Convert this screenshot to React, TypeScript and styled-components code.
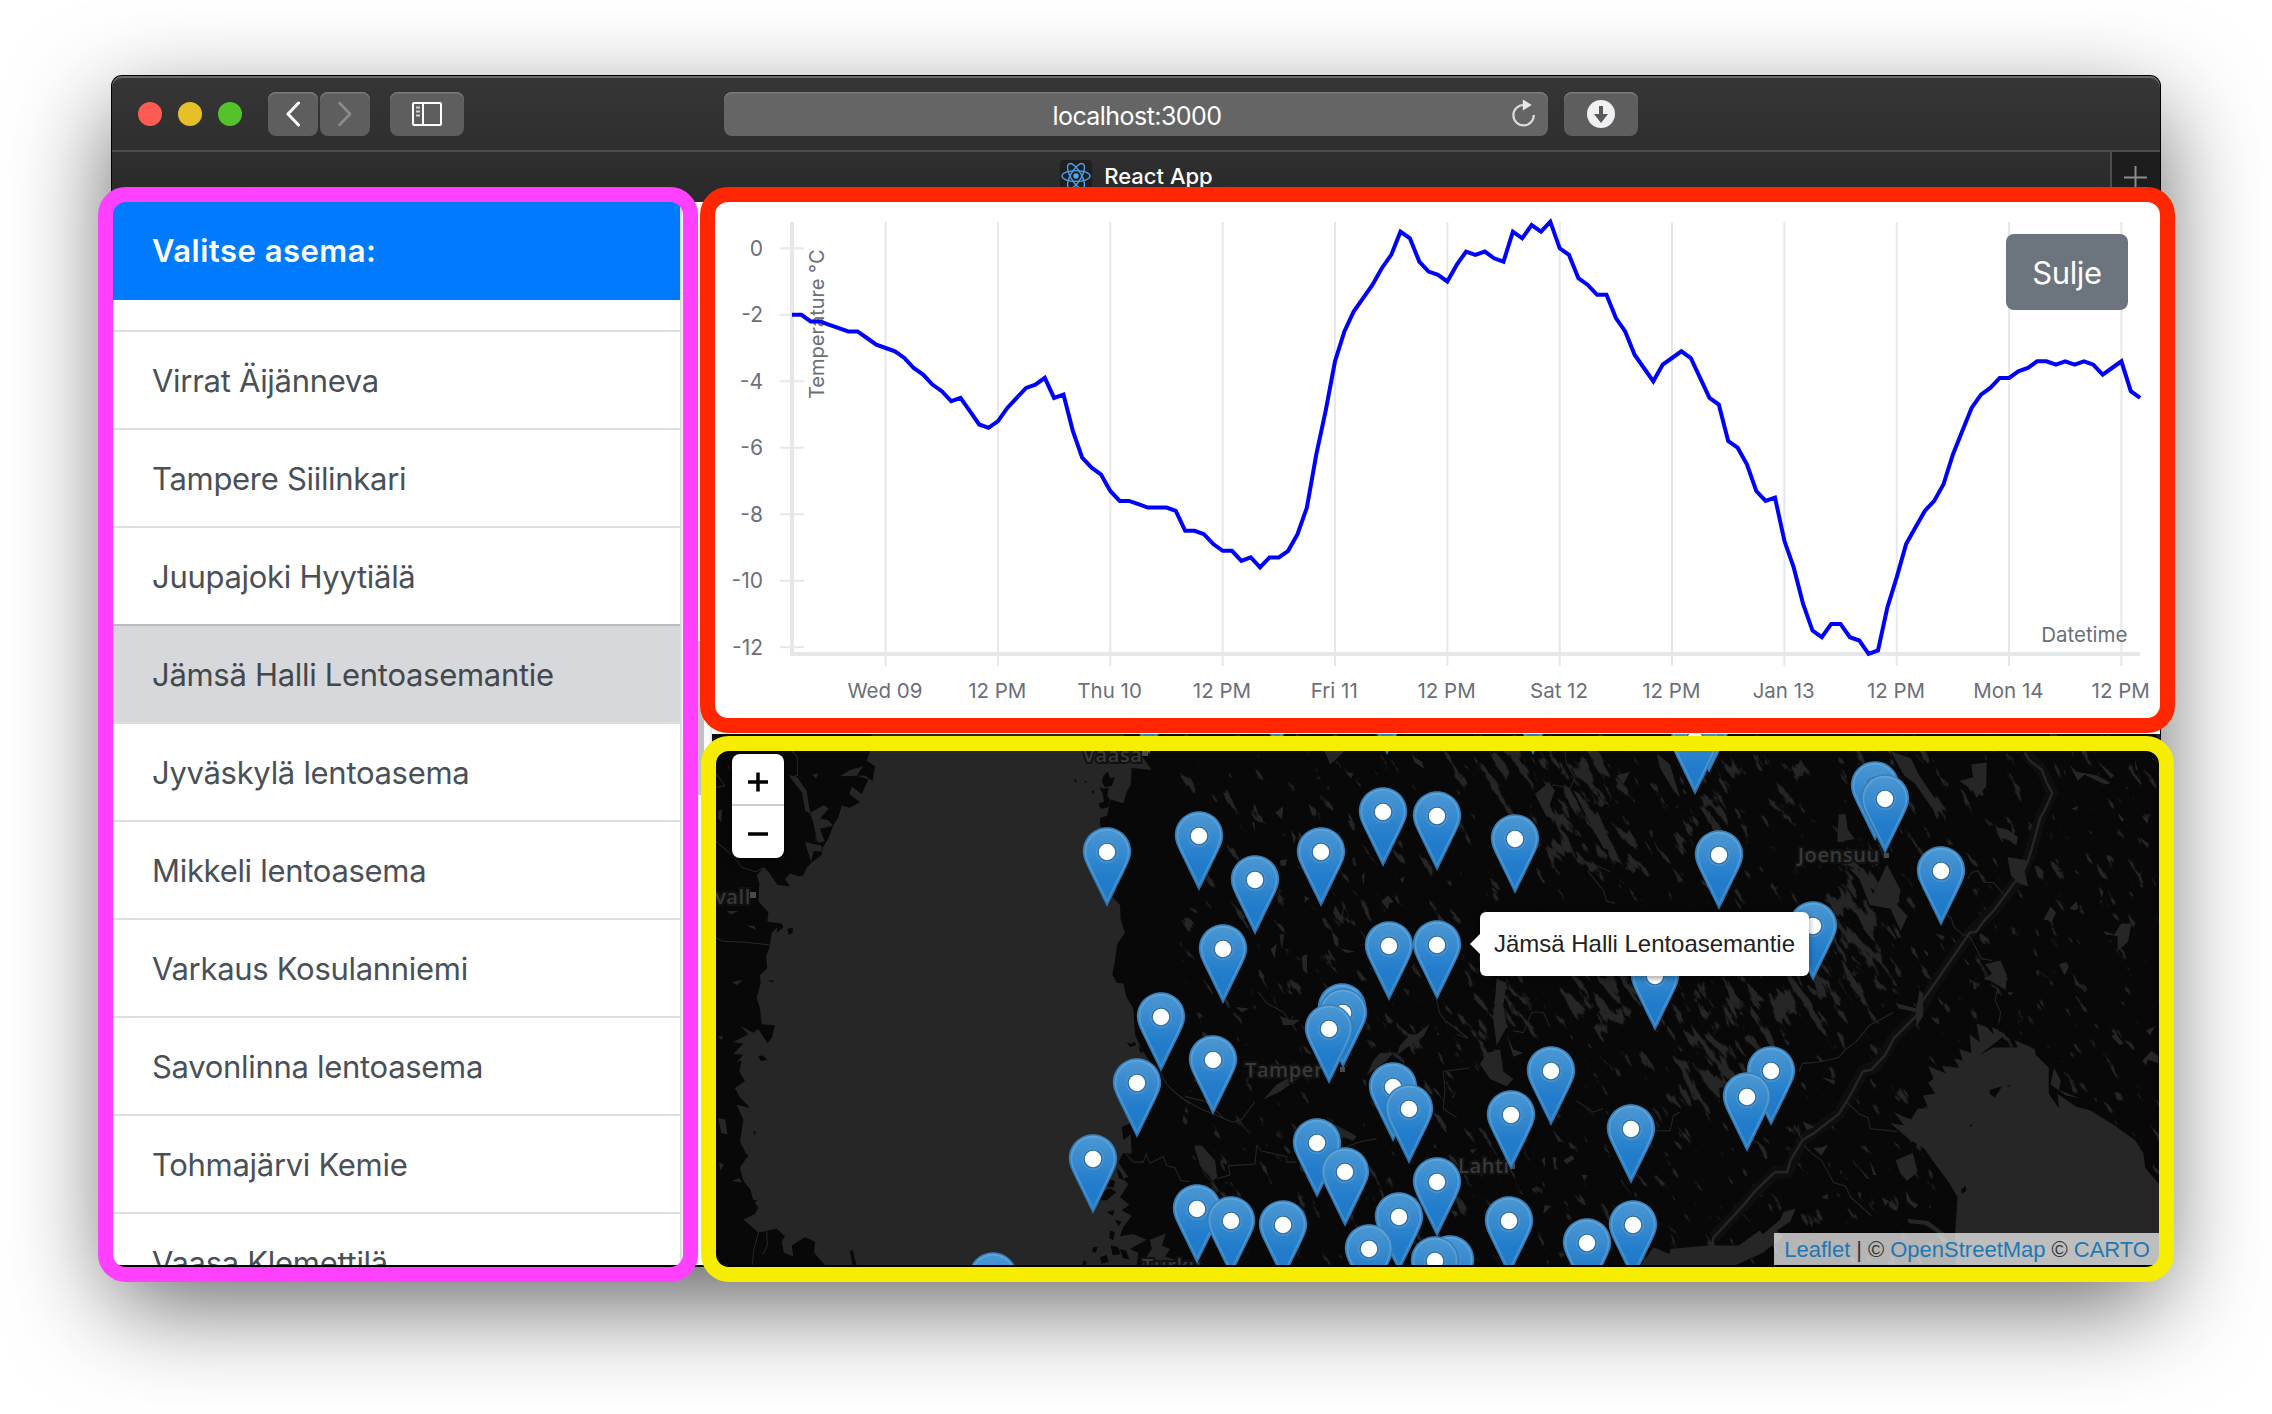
import React from "react";
import styled, { createGlobalStyle, css } from "styled-components";

const GlobalStyle = createGlobalStyle`
  html, body { margin: 0; padding: 0; background: #fff; }
  * { box-sizing: border-box; }
`;

const UI_FONT = `Inter, "Liberation Sans", sans-serif`;
const MAP_FONT = `"Liberation Sans", Arial, sans-serif`;

const Desktop = styled.div`
  position: relative;
  width: 2272px;
  height: 1414px;
  padding: 76px 112px 0;
  overflow: hidden;
  background: #fff;
  font-family: ${UI_FONT};
`;

const Window = styled.div`
  display: flex;
  flex-direction: column;
  height: 1190px;
  border-radius: 10px 10px 0 0;
  background: #2c2c2c;
  box-shadow: 0 0 0 1px #000, 0 36px 100px rgba(0, 0, 0, 0.62);
`;

/* ---------- browser chrome ---------- */

const Toolbar = styled.div`
  display: flex;
  align-items: center;
  height: 76px;
  padding: 2px 0 0 26px;
  border-radius: 10px 10px 0 0;
  border-bottom: 2px solid #4d4d4d;
  background: linear-gradient(#363636, #2e2e2e);
  box-shadow: inset 0 2px 0 #6a6b69;
`;

const Lights = styled.div`
  display: flex;
  gap: 16px;
  margin-right: 26px;
`;

const Light = styled.span<{ $color: string }>`
  width: 24px;
  height: 24px;
  border-radius: 50%;
  background: ${(p) => p.$color};
`;

const barItem = css`
  display: flex;
  align-items: center;
  justify-content: center;
  height: 44px;
  border-radius: 8px;
  background: #5e5e5e;
  box-shadow: inset 0 1.5px 0 #7b7b7b;
`;

const BarButton = styled.div<{ $width: number; $gap: number }>`
  ${barItem}
  width: ${(p) => p.$width}px;
  margin-right: ${(p) => p.$gap}px;
`;

const AddressBar = styled.div`
  ${barItem}
  position: relative;
  width: 824px;
  margin-right: 16px;
  padding: 3px 0 0 2px;
  background: #656565;
  color: #fff;
  font-size: 25px;
  letter-spacing: -0.55px;
`;

const ReloadSlot = styled.span`
  position: absolute;
  right: 11px;
  top: 5px;
  height: 32px;
`;

const TabBar = styled.div`
  display: flex;
  height: 50px;
  background: linear-gradient(#2f2f2f, #292929);
`;

const Tab = styled.div`
  display: flex;
  flex: 1;
  align-items: flex-start;
  justify-content: center;
  gap: 12px;
  padding: 8px 0 0 51px;
  color: #fff;
  font-size: 22px;
  font-weight: 500;
  line-height: 32px;
`;

const TabTitle = styled.span``;

const NewTab = styled.div`
  width: 50px;
  border-left: 2px solid #4d4d4d;
  background: #1d1d1d;
  padding: 14px 0 0 12px;
`;

/* ---------- page ---------- */

const Page = styled.div`
  display: flex;
  height: 1064px;
  background: #fff;
  border-bottom: 1px solid #000;
`;

const Sidebar = styled.div`
  width: 570px;
  overflow: hidden;
  border-right: 2px solid #dfdfe0;
`;

const SidebarHeader = styled.div`
  display: flex;
  align-items: center;
  height: 98px;
  padding: 0 0 2px 40px;
  margin-bottom: 30px;
  background: #007bff;
  color: #fff;
  font-size: 31px;
  font-weight: 600;
  letter-spacing: 0.5px;
`;

const StationRow = styled.div<{ $active?: boolean }>`
  display: flex;
  align-items: center;
  height: 98px;
  padding-left: 40px;
  border-top: 2px solid ${(p) => (p.$active ? "#b9bbbe" : "#dfdfdf")};
  background: ${(p) => (p.$active ? "#d6d8db" : "#fff")};
  color: ${(p) => (p.$active ? "#43484d" : "#495057")};
  font-size: 31px;
  letter-spacing: -0.3px;
  white-space: nowrap;
`;

const ScrollTrack = styled.div`
  width: 30px;
  padding: 439px 6px 0 4px;
  border-right: 2px solid #e8e8e8;
  background: #fafafa;
`;

const ScrollThumb = styled.div`
  height: 154px;
  background: #c1c1c1;
`;

const Main = styled.div`
  display: flex;
  flex: 1;
  flex-direction: column;
`;

const ChartPane = styled.div`
  position: relative;
  height: 532px;
  background: #fff;
  svg { display: block; }
`;

const CloseButton = styled.button`
  position: absolute;
  left: 1294px;
  top: 32px;
  width: 122px;
  height: 76px;
  padding: 0;
  border: 0;
  border-radius: 8px;
  background: #6c757d;
  color: #fff;
  font: 400 31px ${UI_FONT};
  letter-spacing: -0.4px;
`;

const MapPane = styled.div`
  position: relative;
  flex: 1;
  overflow: hidden;
  background: #080808;
  font-family: ${MAP_FONT};
`;

const Tiles = styled.svg`
  display: block;
`;

const Pin = styled.svg`
  position: absolute;
  width: 50px;
  height: 82px;
`;

const ZoomControl = styled.div`
  position: absolute;
  left: 20px;
  top: 20px;
  width: 52px;
  border-radius: 8px;
  overflow: hidden;
  background: #fff;
  box-shadow: 0 2px 10px rgba(0, 0, 0, 0.65);
`;

const ZoomButton = styled.div`
  display: flex;
  align-items: center;
  justify-content: center;
  height: 50px;
  padding-top: 5px;
  & + & { height: 54px; padding-top: 3px; border-top: 2px solid #ccc; }
`;

const Tooltip = styled.div`
  position: absolute;
  left: 768px;
  top: 178px;
  display: flex;
  align-items: center;
  justify-content: center;
  width: 329px;
  height: 64px;
  border-radius: 6px;
  background: #fff;
  color: #222;
  font-size: 24px;
  letter-spacing: -0.02px;
  white-space: nowrap;
  box-shadow: 0 2px 6px rgba(0, 0, 0, 0.4);
  &::before {
    content: "";
    position: absolute;
    left: -10px;
    top: 22px;
    border: 10px solid transparent;
    border-left: 0;
    border-right-color: #fff;
  }
`;

const Attribution = styled.div`
  position: absolute;
  right: 0;
  bottom: 0;
  display: flex;
  align-items: center;
  gap: 6px;
  height: 32px;
  padding: 2px 10px 0;
  background: rgba(255, 255, 255, 0.7);
  color: #333;
  font-size: 22px;
  white-space: nowrap;
`;

const MapLink = styled.span`
  color: #1f78b4;
`;

const Frame = styled.div<{ $x: number; $y: number; $w: number; $h: number; $color: string }>`
  position: absolute;
  left: ${(p) => p.$x}px;
  top: ${(p) => p.$y}px;
  width: ${(p) => p.$w}px;
  height: ${(p) => p.$h}px;
  border: 15px solid ${(p) => p.$color};
  border-radius: 28px;
  pointer-events: none;
`;

/* ---------- data ---------- */

const stations = [
  "Virrat Äijänneva",
  "Tampere Siilinkari",
  "Juupajoki Hyytiälä",
  "Jämsä Halli Lentoasemantie",
  "Jyväskylä lentoasema",
  "Mikkeli lentoasema",
  "Varkaus Kosulanniemi",
  "Savonlinna lentoasema",
  "Tohmajärvi Kemie",
  "Vaasa Klemettilä",
];
const selectedStation = "Jämsä Halli Lentoasemantie";

const temperatures = [
  -2, -2, -2.2, -2.2, -2.3, -2.4, -2.5, -2.5, -2.7, -2.9, -3, -3.1, -3.3, -3.6, -3.8, -4.1, -4.3, -4.6, -4.5, -4.9,
  -5.3, -5.4, -5.2, -4.8, -4.5, -4.2, -4.1, -3.9, -4.5, -4.4, -5.5, -6.3, -6.6, -6.8, -7.3, -7.6, -7.6, -7.7, -7.8,
  -7.8, -7.8, -7.9, -8.5, -8.5, -8.6, -8.9, -9.1, -9.1, -9.4, -9.3, -9.6, -9.3, -9.3, -9.1, -8.6, -7.8, -6.2, -4.9,
  -3.4, -2.5, -1.9, -1.5, -1.1, -0.6, -0.2, 0.5, 0.3, -0.4, -0.7, -0.8, -1, -0.5, -0.1, -0.2, -0.1, -0.3, -0.4, 0.5,
  0.3, 0.7, 0.5, 0.8, 0, -0.2, -0.9, -1.1, -1.4, -1.4, -2.1, -2.5, -3.2, -3.6, -4, -3.5, -3.3, -3.1, -3.3, -3.9,
  -4.5, -4.7, -5.8, -6, -6.5, -7.3, -7.6, -7.5, -8.8, -9.6, -10.7, -11.5, -11.7, -11.3, -11.3, -11.7, -11.8, -12.2,
  -12.1, -10.8, -9.9, -8.9, -8.4, -7.9, -7.6, -7.1, -6.2, -5.5, -4.8, -4.4, -4.2, -3.9, -3.9, -3.7, -3.6, -3.4, -3.4,
  -3.5, -3.4, -3.5, -3.4, -3.5, -3.8, -3.6, -3.4, -4.3, -4.5,
];

const timeTicks = ["Wed 09", "12 PM", "Thu 10", "12 PM", "Fri 11", "12 PM", "Sat 12", "12 PM", "Jan 13", "12 PM", "Mon 14", "12 PM"];

const pins: [number, number][] = [
  [437, -35], [565, -40], [675, -34], [821, -34], [983, -16.5], [997, 5.6 - 22],
  [982.8, 5.6],
  [395, 118], [487, 102], [543, 146], [609, 118], [671, 78], [725, 82], [803, 104.4], [511, 214.3], [677, 212],
  [725, 210.2], [943, 242], [449, 282.3], [425, 348.2], [381, 424.4], [281, 542.5], [629.5, 274], [631, 278.3],
  [617, 294.2], [501, 326], [681, 352.3], [697, 374.5], [839, 336.3], [799, 380.4], [919, 394.4], [605, 408.1],
  [633, 438], [725, 448], [485, 474.3], [519, 486.5], [571, 490.3], [687, 482.5], [657, 514.3], [797, 486.5],
  [875, 508.4], [921, 490.3], [738, 526], [723, 526.5], [1007, 120.3], [1163, 52], [1173, 64.4], [1229, 136.2],
  [1101, 192], [1059, 336.3], [1035, 362.3],
];

/* ---------- chart ---------- */

const HOUR = 9.362;
const chartX = (h: number) => 80 + h * HOUR;
const chartY = (t: number) => 46.3 - t * 33.24;

const AxisText = styled.text<{ $size?: number }>`
  font: 400 ${(p) => p.$size ?? 20.5}px ${UI_FONT};
  fill: #6b6f7a;
`;

function Chart() {
  const path = temperatures.map((t, i) => `${i ? "L" : "M"}${chartX(i).toFixed(1)} ${chartY(t).toFixed(1)}`).join("");
  return (
    <svg width="1448" height="530" viewBox="0 0 1448 530">
      <g stroke="#e6e7e9" strokeWidth="2">
        {timeTicks.map((_, i) => (
          <line key={i} x1={chartX(10 + 12 * i)} x2={chartX(10 + 12 * i)} y1="20" y2="464" />
        ))}
        {[0, -2, -4, -6, -8, -10, -12].map((t) => (
          <line key={t} x1="68" x2="92" y1={chartY(t)} y2={chartY(t)} />
        ))}
        <path d="M80 20V452H1428" fill="none" strokeWidth="4" />
      </g>
      {[0, -2, -4, -6, -8, -10, -12].map((t) => (
        <AxisText key={t} $size={21} x="51" y={chartY(t) + 7.5} textAnchor="end">{t}</AxisText>
      ))}
      {timeTicks.map((label, i) => (
        <AxisText key={i} x={chartX(10 + 12 * i) - 0.7} y="496" textAnchor="middle">{label}</AxisText>
      ))}
      <AxisText $size={20} transform="translate(112 197) rotate(-90)">Temperature °C</AxisText>
      <AxisText x="1415.5" y="440" textAnchor="end">Datetime</AxisText>
      <path d={path} fill="none" stroke="#0000ff" strokeWidth="4" />
    </svg>
  );
}

/* ---------- map tiles ---------- */

const WATER = "#262626";

// cx, cy, rx, ry of the lake districts, in window coordinates
const lakeAreas = [
  [1510, 765, 40, 22], [1590, 790, 40, 40], [1620, 850, 40, 20], [1560, 840, 40, 20], [1500, 990, 16, 50],
  [1600, 1000, 40, 40], [1480, 1040, 45, 12], [1400, 1030, 14, 20], [1710, 810, 28, 50],
  [1780, 790, 20, 24], [1860, 870, 30, 36], [1845, 930, 45, 40], [1800, 1000, 55, 34], [1720, 1035, 50, 40],
  [1870, 980, 24, 24], [1700, 1085, 40, 20], [1910, 775, 12, 24], [1640, 960, 16, 30],
  [1340, 890, 12, 24], [1690, 1150, 14, 8], [1520, 960, 20, 14],
];

function LakeDistricts() {
  return (
    <>
      <defs>
        <filter id="lakes" filterUnits="userSpaceOnUse" x="400" y="0" width="2100" height="2000" colorInterpolationFilters="sRGB">
          <feGaussianBlur in="SourceAlpha" stdDeviation="14" result="density" />
          <feTurbulence type="fractalNoise" baseFrequency="0.036 0.12" numOctaves="5" seed="7" result="noise" />
          <feComposite in="noise" in2="density" operator="arithmetic" k1="0" k2="1" k3="0.2" k4="0" result="sum" />
          <feColorMatrix in="sum" type="matrix" values="0 0 0 0 0  0 0 0 0 0  0 0 0 0 0  0 0 0 14 -9.75" result="shape" />
          <feFlood floodColor={WATER} />
          <feComposite in2="shape" operator="in" />
        </filter>
        <clipPath id="inland">
          <path d="M1180 734H2160V1266H1240L1200 1190L1180 1130L1200 1050L1180 960Z" />
        </clipPath>
      </defs>
      <g clipPath="url(#inland)">
        <g transform="rotate(58 1436 1000)">
          <g filter="url(#lakes)">
            <g transform="rotate(-58 1436 1000)">
              {lakeAreas.map(([cx, cy, rx, ry], i) => (
                <ellipse key={i} cx={cx} cy={cy} rx={rx} ry={ry} />
              ))}
            </g>
          </g>
        </g>
      </g>
    </>
  );
}

const CityText = styled.text`
  font: 600 20px "Open Sans", "Noto Sans", sans-serif;
  fill: #383939;
  letter-spacing: 0.6px;
  paint-order: stroke;
  stroke: #111;
  stroke-width: 4px;
`;

function MapTiles() {
  return (
    <Tiles width="1448" height="532" viewBox="712 734 1448 532">
      <LakeDistricts />
      <g transform="translate(690 720) scale(.33333 .37)">
        <path
          fill={WATER}
          d="M545 38L540 84L530 110L555 125L548 165L525 150L450 152L480 135L520 125L500 150L535 160L515 200L485 180L478 200L510 222L480 237L455 232L445 262L430 285L415 320L398 345L395 365L365 385L350 400L340 420L325 422L300 415L285 430L300 450L262 445L235 410L222 398L200 420L208 440L205 490L235 520L232 545L275 550L280 560L260 575L262 560L245 575L240 610L228 640L232 670L210 690L212 710L200 750L210 780L215 822L255 825L245 860L232 873L205 835L190 845L150 826L175 850L130 870L160 875L130 902L160 905L140 925L155 920L148 950L165 975L135 995L150 1020L180 1048L140 1040L160 1080L150 1140L172 1180L150 1210L160 1245L182 1270L190 1300L205 1318L195 1335L160 1350L205 1385L260 1375L285 1395L275 1410L282 1440L310 1450L305 1420L345 1398L375 1410L372 1440L410 1478L1340 1478L1345 1440L1320 1430L1370 1405L1330 1390L1290 1395L1300 1370L1325 1340L1295 1325L1318 1310L1290 1290L1315 1255L1300 1240L1315 1235L1285 1195L1300 1170L1325 1172L1322 1120L1300 1135L1295 1100L1320 1090L1360 1060L1400 1000L1385 930L1355 890L1335 850L1330 780L1310 750L1300 712L1280 710L1267 688L1275 650L1282 605L1305 575L1292 540L1290 500L1270 480L1240 300L1250 262L1262 215L1300 225L1310 195L1322 175L1325 130L1385 135L1350 90L1300 38Z"
        />
        <path fill={WATER} d="M1350 1478L1385 1430L1380 1405L1428 1388L1415 1420L1440 1430L1425 1450L1460 1460L1450 1478Z" />
        <g fill="#080808">
          <path d="M1240 150l14-10 6 18 14-4-8 24-20 4-10-14zM1228 180l10 6 18-2-4 20 8 12-4 20-24 4-6-14 16-6-4-20zM1230 265l20-6 10 20-24 14-6-10zM1152 160l8 2-4 8zM1182 165l8 0-2 6zM1205 190l8 4-6 6z" />
          <path d="M292 565l16-4 0 14-12 6zM236 704l16 0-6 6zM204 910l14-4 14 12-18 4zM190 1110l8 2-4 10zM164 1174l10-2-2 12-8 0zM186 1296l16 2-10 8zM480 1436l8-4 6 24 8 22-14 0z" />
          <path d="M1310 870l14 6 8-6 8 8-20 6zM1345 880l16 16-10 4zM1210 1424l12 0-4 16-12-4zM1230 1452l20-6 6 18-22 6zM1260 1380l14 4-4 22-12-6zM1262 1420l22 4 8 20-24 2zM1290 1430l18 4 10 24-20-4zM1180 1460l10 4-4 14-10 0zM1252 1240l24 6-6 18-22-4zM1220 1280l40-14 20 10-30 22-24 0zM1280 1210l12 12 10 22-16-6zM1250 1330l24-6-6 16zM1275 1350l20 6-10 12z" />
        </g>
        <g fill="none" stroke={WATER} strokeWidth="3">
          <path d="M305 84L322 100L322 150L300 155M320 155L345 195L360 250L380 290L378 330M78 145L105 178L78 182M78 328L130 368L155 398L195 410L220 400M78 590L100 598L160 600L240 608M205 1385L192 1430L186 1476M230 1380L232 1420L218 1445M1412 950L1430 985L1460 1010L1500 1038M1300 1165L1330 1195L1360 1195L1368 1172L1380 1198L1420 1180L1430 1205L1455 1210L1472 1245L1500 1248" />
        </g>
        <g fill={WATER}>
          <path d="M298 148l24 8 28 36 10 60-14-6-10-50-30-34zM362 250l40-20 14 10-26 26 24 4 16 16-40 8 14 34-20 4zM345 330l50 10 0 16-24-2-8 30-10-30zM366 148l20-4-8 14zM84 246l12-4-2 34-10-10zM110 516l34 0-20 10zM168 556l26 0 4 10zM126 708l34-6-20 14zM84 856l14-2-2 12zM84 1076l22 4 6 40-18-4zM88 1196l14 6-12 16zM126 1246l22-8 8 12zM120 130l-10-14 8 18z" />
        </g>
      </g>
      <g transform="translate(1180 720) scale(.33333 .37)">
        <g fill={WATER}>
          <path d="M432 84L492 84L470 105L450 120L442 100ZM42 1150L65 1150L105 1190L112 1235L100 1245L60 1205ZM695 90l10 12 20 10 8 20-30-18zM495 140l25 4-6 14zM286 250l24-16-4 34-10-8zM386 228l22 14 2 16-14 0zM216 280l6-8 4 30zM332 296l16 20-6 20zM300 380l20-4-2 18-16 0zM604 490l20-16 18 18-16 4-2 16zM545 420l10-8-4 34zM660 430l14-8-6 20zM374 474l14 8-14 12zM365 640l16-8 0 56-12-14zM272 620l18-16-6 40zM298 580l14 0-6 40zM166 776l40 4-20 10z" />
          <path d="M1380 1478L1420 1425L1460 1440L1500 1452L1500 1478ZM1085 1190l10-10 0 30zM1118 1180l12 4-6 34zM1150 1190l26-14 8 10-24 14zM1205 1230l18 0-10 16zM1094 1310l20 4-24 22zM465 500l18 30 10-30-8 50-24-32zM455 570l20 20 0 26 50 10-26 4-36-24z" />
          <path d="M1065 200l40-30 20 20-16 40 20 40-30-10zM1180 190l20 10 60 100-20-4zM1230 280l40 10 40 70-40-14zM1310 150l40-10-20 34zM1430 90l40 30 30 90-20-20-40-60zM950 700l30 10-10 60 10 60-30 50-10-70zM920 900l40-10 10 60 30 20-20 20-50-20-30-40zM980 850l20 40 30 10-30 10z" />
          <path d="M660 880l30-30 20 0 40-30-20 36-50 30-30 20zM600 900l40 0-20 20-60 40 20-40zM300 800l30 10 30 0-20 14-30 0zM290 985l40-20 30 0-30 20-30 20-50 20zM430 1085l40 10 60 30-10 12-50-16zM760 1060l20 10 20 30-6 6-20-20zM870 1160l20 0-14 12zM830 1000l-10 20-6 0z" />
        </g>
        <g fill="none" stroke={WATER} strokeWidth="3">
          <path d="M235 735L260 765L310 790L350 840M340 800L330 815M110 1240L150 1230L145 1205L225 1200L230 1150L245 1165L320 1180L320 1195L350 1195M0 1018L60 1050L160 1088M15 1018L75 1030L130 1075M160 1086L185 1080L225 1032M480 1160L540 1140L590 1132M770 755L778 790L800 820M870 940L790 950L795 1000L790 1050L830 1075M1155 84L1160 120L1185 155L1170 185L1120 175L1090 210M1290 410L1240 390L1225 410L1270 460L1280 490L1305 495M1000 840L1030 845L1055 790L1090 790L1110 830M1190 1030L1240 1060L1270 1050M1425 1110L1470 1110L1480 1070L1500 1060M800 815L865 860L830 850" />
        </g>
      </g>
      <g transform="translate(1670 720) scale(.34435 .37)">
        <path fill="none" stroke="#0e0e0e" strokeWidth="34" d="M1030 88L1080 135L1110 198L1075 265L1050 350L1020 420L940 515L870 575L770 710L715 800L650 860L600 935L560 950L490 1065L385 1135L340 1222L305 1222L215 1310L125 1400" />
        <g fill={WATER}>
          <path d="M900 905L940 885L1010 885L1000 865L1060 890L1062 905L1100 940L1100 1010L1130 1050L1125 1010L1180 1045L1220 1055L1290 1095L1350 1135L1375 1170L1380 1210L1425 1260L1425 1478L830 1478L828 1390L835 1290L810 1250L770 1200L740 1160L690 1130L640 1090L680 1095L650 1060L700 1080L720 1050L750 1050L735 1015L770 1010L750 980L765 970L750 935L800 955L790 935L840 940L825 915L850 920L840 890L875 900L870 850L900 870L890 820L920 830L940 850L935 830L975 850Z" />
          <path d="M1105 985L1115 940L1135 975L1130 1000L1190 1022L1150 1015ZM0 1430L110 1420L200 1420L260 1380L270 1390L320 1350L330 1330L365 1320L350 1355L310 1380L330 1395L270 1440L180 1478L0 1478Z" />
          <path d="M875 120L920 115L918 180L890 210L880 190L840 165L880 155ZM915 660L960 650L978 690L975 730L930 705L910 700L935 685ZM980 735l18 2-12 8zM1130 660l22-6 6 14-12 22zM1160 120l20 20 60 10 40 20-16 4-60-26-20 16zM1240 110l50 40-10 8zM1300 250l20 20-10 4zM1370 260l20 4-4 18zM1365 320l26 14-4 14zM1350 108l10 30-8-4zM1260 570l30 10 20-30 30 0-10 50-30 24 0-40-36-4zM1165 240l20-8-4 12zM1245 450l14 14-6 18zM1085 540l20-36 16 16-14 30-8-8zM1160 510l20-20 6 20-12 4zM1180 590l12 14-6 0zM1282 855l12-8 24 28-12 4zM1372 920l26-26 20 14 0 20-30-10-6 16zM1382 840l26-12-14 24zM940 270l10 20 30 6 30 20-4 24-20-14-30-10zM990 280l12 20-6 14zM980 370l60 10-10 30 10 40-30-10-20-20z" />
          <path d="M850 640l20 20-6 2zM880 710l10 0 0 18-8 0zM770 578l28 6-6 12zM735 620l16 10-4 10zM490 255l20 0 6 40 20 26-50 10zM640 84l60 20 20 40 50 70 20 30-20 6-60-80-30-20zM520 400l40 10 30 60 40-80 40 70-10 40 30 30-20 40-30-60-60-10-30-70zM655 765l60 15 10-50 10 10 0 60-20 30 0-40-50-10zM655 1190l50-20 14 50-30 26-20-20zM440 1155l20-8-20 30-24-20zM440 965l40 10-4 10zM540 1200l40 40-8 0zM580 1190l20 40-10 0zM685 1270l16 30 20 10-10 10-24-20zM690 1348l60 6 50 36-20-2-40-24-46-4zM615 1290l20 10-10 14zM546 1275l10 4-4 20zM440 1290l18-10 0 16zM385 1085l36 14-24 10z" />
        </g>
        <g fill="#080808">
          <path d="M928 1000l36-10-20 30-14-8zM845 1270l14-12 0 16-12 6zM870 1094l8 0-4 6zM980 988l10 0-8 4z" />
        </g>
        <g fill="none" stroke={WATER}>
          <path strokeWidth="7" d="M1030 88L1045 110L1080 135L1092 165L1110 198L1090 240L1075 265L1050 350L1038 385L1020 420L1000 440L940 515L910 545L890 572L870 575L830 630L770 710L725 770L715 800L650 860L625 905L585 945L560 950L520 1020L490 1065L420 1115L385 1135L350 1190L340 1222L305 1222L250 1270L215 1310L125 1400L125 1425" />
          <path strokeWidth="3" d="M865 430L875 412L895 408L912 438L940 440L968 470M815 530L825 560L850 580L870 585L885 610L905 645L935 650M948 735L945 760L960 790L955 820M650 790L580 825L540 870L510 890L490 912L430 925L385 928L375 950M515 1035L550 1065L575 1075L582 1105L660 1112M390 1150L410 1170L440 1190L475 1250L510 1260L525 1290L585 1340M372 1095L375 1120L385 1135" />
        </g>
      </g>
      <CityText x="1082.500" y="762">Vaasa</CityText>
      <CityText x="715" y="904">vall</CityText>
      <CityText x="1245" y="1076.500">Tampere</CityText>
      <CityText x="1458" y="1173">Lahti</CityText>
      <CityText x="1798" y="861.5">Joensuu</CityText>
      <CityText x="1142" y="1273">Turku</CityText>
      <g fill="#4a4a4a">
        <path d="M1142 750h6v6h-6zM750 892h6v6h-6zM1884 853h5v5h-5zM1340 1067h5v5h-5zM1510 1164h5v5h-5z" />
      </g>
    </Tiles>
  );
}

function StationPin({ x, y }: { x: number; y: number }) {
  return (
    <Pin viewBox="0 0 50 82" style={{ left: x - 25, top: Math.round(y - 25.6) }}>
      <path d="M25 1.2C11.5 1.2 .8 12 .8 25.600C.8 31 3 36 6 42L25 81L44 42C47 36 49.200 31 49.200 25.600C49.200 12 38.500 1.200 25 1.200Z" fill="url(#pinRim)" />
      <path d="M25 3.700C13 3.700 3.400 13.500 3.400 25.600C3.400 30.500 5.300 35.500 8 41L25 75.500L42 41C44.700 35.500 46.600 30.500 46.600 25.600C46.600 13.500 37 3.700 25 3.700Z" fill="url(#pinFill)" stroke="url(#pinEdge)" strokeWidth="1.800" />
      <circle cx="25" cy="26" r="11" fill="#4a94d0" />
      <circle cx="25" cy="26" r="9.600" fill="#2b6ea8" />
      <circle cx="25" cy="26" r="8.200" fill="#fff" />
    </Pin>
  );
}

function PinGradients() {
  return (
    <defs>
      <linearGradient id="pinFill" x1="0" y1="0" x2="0" y2="1">
        <stop offset="0" stopColor="#4b97d2" />
        <stop offset=".68" stopColor="#217ccb" />
        <stop offset="1" stopColor="#2279c6" />
      </linearGradient>
      <linearGradient id="pinEdge" x1="0" y1="0" x2="0" y2="1">
        <stop offset="0" stopColor="#5ea5dc" />
        <stop offset="1" stopColor="#398bcc" />
      </linearGradient>
      <linearGradient id="pinRim" x1="0" y1="0" x2="0" y2="1">
        <stop offset="0" stopColor="#3a80b8" />
        <stop offset="1" stopColor="#2a72ae" />
      </linearGradient>
    </defs>
  );
}

const GradientSheet = styled.svg`
  position: absolute;
  width: 0;
  height: 0;
`;

/* ---------- icons ---------- */

const BackIcon = () => (
  <svg width="16" height="26" viewBox="0 0 16 26" fill="none" stroke="#fff" strokeWidth="3" strokeLinecap="round" strokeLinejoin="round">
    <path d="M13.500 2L3 13L13.500 24" />
  </svg>
);
const ForwardIcon = () => (
  <svg width="16" height="26" viewBox="0 0 16 26" fill="none" stroke="#8b8b8e" strokeWidth="2.600" strokeLinecap="round" strokeLinejoin="round">
    <path d="M2.500 2L13 13L2.500 24" />
  </svg>
);
const SidebarIcon = () => (
  <svg width="30" height="24" viewBox="0 0 30 24" fill="none" stroke="#fff" strokeWidth="2">
    <rect x="1" y="1" width="28" height="22" rx="1" />
    <path d="M11 1V23" />
    <path d="M4 5.500h4M4 9.500h4M4 13.500h4" stroke="#cfcfcf" />
  </svg>
);
const ReloadIcon = () => (
  <svg width="26" height="32" viewBox="0 0 26 32" fill="none">
    <path d="M12.500 8A10.200 10.200 0 1 0 22.800 18" stroke="#dcdcde" strokeWidth="2.200" />
    <path d="M11.800 2.500L20.800 8L11.800 13.500Z" fill="#e8e8ea" />
  </svg>
);
const DownloadIcon = () => (
  <svg width="28" height="28" viewBox="0 0 28 28">
    <circle cx="14" cy="14" r="14" fill="#f0f0f2" />
    <path d="M12 6h4v8h5l-7 9-7-9h5z" fill="#59595b" />
  </svg>
);
const ReactIcon = () => (
  <svg width="32" height="32" viewBox="0 0 32 32">
    <rect width="32" height="32" rx="4" fill="#1f1f20" />
    <circle cx="16" cy="16" r="2.700" fill="#54a9f5" />
    <g fill="none" stroke="#4ea0ea" strokeWidth="1.400">
      <ellipse cx="16" cy="16" rx="14" ry="5.400" />
      <ellipse cx="16" cy="16" rx="14" ry="5.400" transform="rotate(60 16 16)" />
      <ellipse cx="16" cy="16" rx="14" ry="5.400" transform="rotate(120 16 16)" />
    </g>
  </svg>
);
const PlusThin = () => (
  <svg width="23" height="23" viewBox="0 0 23 23" stroke="#8c8c8c" strokeWidth="2">
    <path d="M0 11.500H23M11.500 0V23" />
  </svg>
);
const ZoomGlyph = ({ plus }: { plus?: boolean }) => (
  <svg width="20" height="20" viewBox="0 0 20 20" stroke="#000" strokeWidth="3.500">
    <path d={plus ? "M0 10H20M10 .5V19.500" : "M0 10H20"} />
  </svg>
);

export default function App() {
  const sortedPins = [...pins].sort((a, b) => a[1] - b[1]);
  return (
    <>
      <GlobalStyle />
      <Desktop>
        <Window>
          <Toolbar>
            <Lights>
              <Light $color="#ff5b52" />
              <Light $color="#e6c029" />
              <Light $color="#53c22b" />
            </Lights>
            <BarButton $width={50} $gap={2}><BackIcon /></BarButton>
            <BarButton $width={50} $gap={20}><ForwardIcon /></BarButton>
            <BarButton $width={74} $gap={260}><SidebarIcon /></BarButton>
            <AddressBar>
              localhost:3000
              <ReloadSlot><ReloadIcon /></ReloadSlot>
            </AddressBar>
            <BarButton $width={74} $gap={0}><DownloadIcon /></BarButton>
          </Toolbar>
          <TabBar>
            <Tab>
              <ReactIcon />
              <TabTitle>React App</TabTitle>
            </Tab>
            <NewTab><PlusThin /></NewTab>
          </TabBar>
          <Page>
            <Sidebar>
              <SidebarHeader>Valitse asema:</SidebarHeader>
              {stations.map((name) => (
                <StationRow key={name} $active={name === selectedStation}>{name}</StationRow>
              ))}
            </Sidebar>
            <ScrollTrack><ScrollThumb /></ScrollTrack>
            <Main>
              <ChartPane>
                <Chart />
                <CloseButton>Sulje</CloseButton>
              </ChartPane>
              <MapPane>
                <GradientSheet><PinGradients /></GradientSheet>
                <MapTiles />
                {sortedPins.map(([x, y]) => (
                  <StationPin key={`${x},${y}`} x={x} y={y} />
                ))}
                <Tooltip>{selectedStation}</Tooltip>
                <ZoomControl>
                  <ZoomButton><ZoomGlyph plus /></ZoomButton>
                  <ZoomButton><ZoomGlyph /></ZoomButton>
                </ZoomControl>
                <Attribution>
                  <MapLink>Leaflet</MapLink>|<span>©</span>
                  <MapLink>OpenStreetMap</MapLink>
                  <span>©</span>
                  <MapLink>CARTO</MapLink>
                </Attribution>
              </MapPane>
            </Main>
          </Page>
        </Window>
        <Frame $x={98} $y={187} $w={600} $h={1095} $color="#ff40ff" />
        <Frame $x={700} $y={187} $w={1475} $h={546} $color="#ff2600" />
        <Frame $x={701} $y={736} $w={1473} $h={546} $color="#f7ed00" />
      </Desktop>
    </>
  );
}
